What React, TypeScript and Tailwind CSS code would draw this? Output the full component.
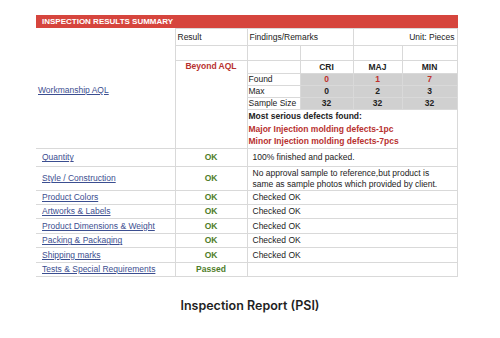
const LINE = "border border-[#d9d9d9]";

const rows = [
  { label: "Quantity", result: "OK", note: ["100% finished and packed."], h: "h-[18px]" },
  {
    label: "Style / Construction",
    result: "OK",
    note: ["No approval sample to reference,but product is", "same as sample photos which provided by client."],
    h: "h-[24px]",
  },
  { label: "Product Colors", result: "OK", note: ["Checked OK"], h: "h-[14px]" },
  { label: "Artworks & Labels", result: "OK", note: ["Checked OK"], h: "h-[14px]" },
  { label: "Product Dimensions & Weight", result: "OK", note: ["Checked OK"], h: "h-[15px]" },
  { label: "Packing & Packaging", result: "OK", note: ["Checked OK"], h: "h-[14px]" },
  { label: "Shipping marks", result: "OK", note: ["Checked OK"], h: "h-[15px]" },
  { label: "Tests & Special Requirements", result: "Passed", note: [], h: "h-[14px]" },
];

const aql = [
  { name: "Found", values: ["0", "1", "7"], red: true },
  { name: "Max", values: ["0", "2", "3"], red: false },
  { name: "Sample Size", values: ["32", "32", "32"], red: false },
];

export default function App() {
  return (
    <div className="w-[500px] h-[338px] bg-white pt-[15px] pl-[36px] font-['Liberation_Sans',Arial,sans-serif] text-[8.5px] text-[#222]">
      <div className="w-[422px]">
        <div className="h-[13px] bg-[#d6453d] text-white text-[8px] font-bold pl-[6px] flex items-center leading-none">
          INSPECTION RESULTS SUMMARY
        </div>
        <table className="table-fixed border-collapse w-[421px] leading-none">
          <colgroup>
            <col className="w-[139px]" />
            <col className="w-[72px]" />
            <col className="w-[53px]" />
            <col className="w-[53px]" />
            <col className="w-[49px]" />
            <col className="w-[55px]" />
          </colgroup>
          <tbody>
            <tr className="h-[17px]">
              <td rowSpan={7} className="border-b border-[#d9d9d9] px-[2px] align-middle pt-[4px]">
                <span className="text-[#3b4e90] underline">Workmanship AQL</span>
              </td>
              <td className={`${LINE} px-[2px]`}>Result</td>
              <td colSpan={2} className={`${LINE} px-[2px]`}>Findings/Remarks</td>
              <td colSpan={2} className={`${LINE} px-[2px] text-right`}>Unit: Pieces</td>
            </tr>
            <tr className="h-[15px]">
              <td className={LINE}></td>
              <td className={LINE}></td>
              <td className={LINE}></td>
              <td className={LINE}></td>
              <td className={LINE}></td>
            </tr>
            <tr className="h-[13px]">
              <td rowSpan={5} className={`${LINE} align-top text-center font-bold text-[#b8312f] pt-[1px]`}>
                Beyond AQL
              </td>
              <td className={LINE}></td>
              <td className={`${LINE} text-center font-bold`}>CRI</td>
              <td className={`${LINE} text-center font-bold`}>MAJ</td>
              <td className={`${LINE} text-center font-bold`}>MIN</td>
            </tr>
            {aql.map((r) => (
              <tr key={r.name} className="h-[12px]">
                <td className={`${LINE} px-[1px]`}>{r.name}</td>
                {r.values.map((v, i) => (
                  <td
                    key={i}
                    className={`${LINE} bg-[#d0d0d0] text-center font-bold ${r.red ? "text-[#c0302c]" : "text-[#222]"}`}
                  >
                    {v}
                  </td>
                ))}
              </tr>
            ))}
            <tr className="h-[39px]">
              <td colSpan={4} className={`${LINE} px-[1px] font-bold leading-[12.5px]`}>
                <div>Most serious defects found:</div>
                <div className="text-[#b8312f]">Major Injection molding defects-1pc</div>
                <div className="text-[#b8312f]">Minor Injection molding defects-7pcs</div>
              </td>
            </tr>
            {rows.map((r) => (
              <tr key={r.label} className={r.h}>
                <td className="border-y border-[#d9d9d9] pl-[6px]">
                  <span className="text-[#3b4e90] underline">{r.label}</span>
                </td>
                <td className={`${LINE} text-center font-bold text-[#4e7d2a]`}>{r.result}</td>
                <td colSpan={4} className={`${LINE} pl-[5px] leading-[11px]`}>
                  {r.note.map((n) => (
                    <div key={n}>{n}</div>
                  ))}
                </td>
              </tr>
            ))}
          </tbody>
        </table>
      </div>
      <div className="w-[428px] mt-[21px] text-center font-['Inter',sans-serif] text-[12.5px] font-semibold text-[#1f1f1f] leading-[16px]">
        Inspection Report (PSI)
      </div>
    </div>
  );
}
